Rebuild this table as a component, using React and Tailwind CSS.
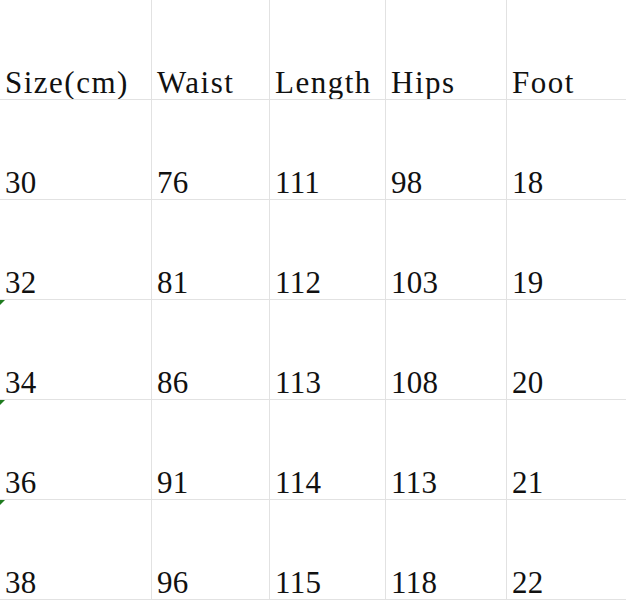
const header = ['Size(cm)', 'Waist', 'Length', 'Hips', 'Foot'];

const rows = [
  ['30', '76', '111', '98', '18'],
  ['32', '81', '112', '103', '19'],
  ['34', '86', '113', '108', '20'],
  ['36', '91', '114', '113', '21'],
  ['38', '96', '115', '118', '22'],
];

// rows whose first cell carries the green "number as text" marker
const flagged = ['34', '36', '38'];

function Cell({ children, flag, head }) {
  return (
    <div className="relative flex items-end h-[100px] border-r border-b border-[#e2e2e2] pl-[5px] pb-[1px] overflow-hidden">
      {flag && (
        <span className="absolute top-0 left-0 w-0 h-0 border-t-[5px] border-r-[5px] border-t-[#1e7b1e] border-r-transparent" />
      )}
      <span className={'leading-[31px] whitespace-nowrap ' + (head ? 'tracking-[1.5px]' : 'tracking-[0.3px]')}>
        {children}
      </span>
    </div>
  );
}

export default function App() {
  return (
    <div
      className="w-[626px] h-[601px] bg-white text-[31px] text-[#111] overflow-hidden"
      style={{ fontFamily: '"Liberation Serif", "Noto Sans CJK SC", serif' }}
    >
      <div className="grid grid-cols-[152px_118px_116px_121px_130px] w-[637px]">
        {header.map((h) => (
          <Cell key={h} head>
            {h}
          </Cell>
        ))}
        {rows.map((r) =>
          r.map((v, i) => (
            <Cell key={r[0] + '-' + i} flag={i === 0 && flagged.includes(r[0])}>
              {v}
            </Cell>
          ))
        )}
      </div>
    </div>
  );
}
